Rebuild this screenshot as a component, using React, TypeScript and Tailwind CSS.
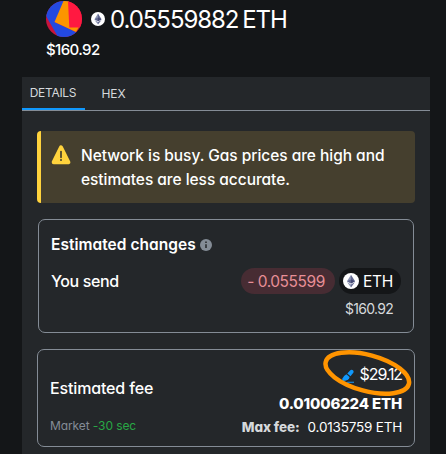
import type { ReactNode } from "react";

function EthIcon({ className }: { className: string }) {
  return (
    <svg viewBox="0 0 16 16" className={className}>
      <circle cx="8" cy="8" r="8" fill="#fff" />
      <path d="M8 1.800 4 8.200 8 10.500z" fill="#8a92b2" />
      <path d="M8 1.800 12 8.200 8 10.500z" fill="#626890" />
      <path d="M4 8.200 8 6.400v4.100z" fill="#62688f" />
      <path d="M12 8.200 8 6.400v4.100z" fill="#454a75" />
      <path d="M4 9.100 8 11.400v3z" fill="#8a92b2" />
      <path d="M12 9.100 8 11.400v3z" fill="#626890" />
    </svg>
  );
}

function Avatar() {
  return (
    <svg viewBox="0 0 36 36" className="block size-9">
      <defs>
        <clipPath id="avatar">
          <circle cx="18" cy="18" r="18" />
        </clipPath>
      </defs>
      <g clipPath="url(#avatar)">
        <rect width="36" height="36" fill="#c8143c" />
        <path d="M-4 12 6 0h16L8.500 21 32 32 22 40 12 36 0 15z" fill="#2349e0" />
        <path d="M17.500 0H23l10 26-3 5L8.500 21z" fill="#fc9500" />
        <path d="M22 0h14v26.500H23.300z" fill="#ff1941" />
      </g>
    </svg>
  );
}

function Card({ className, children }: { className: string; children: ReactNode }) {
  return <section className={`rounded-[7px] border border-[#848c96] ${className}`}>{children}</section>;
}

export default function App() {
  return (
    <div className="h-[454px] w-[446px] overflow-hidden bg-[#141618] pr-4 pl-[22px] font-['Inter','Liberation_Sans',sans-serif] text-white [font-feature-settings:'cv11']">
      <header className="h-[77px] pt-px pl-6">
        <div className="flex h-9 items-center">
          <Avatar />
          <EthIcon className="ml-[9px] size-[14px]" />
          <h1 className="ml-[5px] pt-px text-[24px] leading-9 tracking-[-1.050px] [word-spacing:-2px] whitespace-nowrap">0.05559882 ETH</h1>
        </div>
        <p className="pt-px text-[15px] leading-6 font-medium tracking-[-0.6px]">$160.92</p>
      </header>

      <main className="h-[377px] bg-[#24272a]">
        <nav className="flex h-[34px] border-b border-[#848c96] text-[12px] leading-8 text-[#d6d9dc]">
          <button className="h-[33px] w-[63px] border-b-2 border-[#1098fc] pr-px tracking-[-0.300px]">DETAILS</button>
          <button className="h-[33px] w-[57px] tracking-[-0.1px]">HEX</button>
        </nav>

        <div className="px-[15px] pt-5">
          <div className="flex h-[72px] rounded-[4px] border-l-4 border-[#ffd33d] bg-[#453f2e] pt-[13px] pl-[10px]">
            <svg viewBox="0 0 20 20" className="mt-px size-5">
              <path d="M10 2.300 17.300 17.200H2.700z" fill="#ffd33d" stroke="#ffd33d" strokeWidth="4" strokeLinejoin="round" />
              <path d="M10 6.500v5.800" stroke="#453f2e" strokeWidth="1.700" strokeLinecap="round" />
              <circle cx="10" cy="15" r="1" fill="#453f2e" />
            </svg>
            <p className="ml-[10px] text-[15.500px] leading-6 font-medium tracking-[-0.040px] whitespace-nowrap">
              Network is busy. Gas prices are high and
              <br />
              estimates are less accurate.
            </p>
          </div>

          <Card className="mx-px mt-4 h-[114px] px-3 pt-[13px]">
            <div className="flex h-6 items-center">
              <h2 className="text-[15.500px] font-semibold tracking-[0.030px]">Estimated changes</h2>
              <svg viewBox="0 0 12 12" className="ml-1 size-3">
                <circle cx="6" cy="6" r="6" fill="#848c96" />
                <path d="M6 5.200v3.800M6 2.600v1.500" stroke="#24272a" strokeWidth="1.500" />
              </svg>
            </div>
            <div className="mt-[11px] flex h-[26px] items-center">
              <span className="text-[16px] font-medium tracking-[-0.400px]">You send</span>
              <span className="ml-auto flex h-[26px] w-[94px] items-center justify-center rounded-full bg-[#472c33] pt-px pr-1 text-[15.500px] tracking-[-0.450px] text-[#e88f97]">- 0.055599</span>
              <span className="ml-1 flex h-[26px] w-[62px] items-center rounded-full bg-[#141618] pl-1 text-[15.500px] tracking-[-0.300px]">
                <EthIcon className="mr-1 size-4" />
                <span className="pt-px">ETH</span>
              </span>
            </div>
            <p className="mt-[5px] pr-2 text-right text-[14px] leading-5 tracking-[-0.700px] text-[#d6d9dc]">$160.92</p>
          </Card>

          <Card className="relative mt-4 flex h-[98px] justify-between px-3">
            <div className="pt-[26px]">
              <h2 className="text-[16px] leading-6 font-medium tracking-[-0.150px]">Estimated fee</h2>
              <p className="mt-4 text-[12px] leading-5 tracking-[-0.100px] text-[#848c96]">
                Market <span className="text-[#28a745]">-30 sec</span>
              </p>
            </div>
            <div className="pt-3 text-right whitespace-nowrap">
              <div className="flex h-6 items-center justify-end">
                <svg viewBox="0 0 12 14" className="mt-[3px] mr-[6px] h-[14px] w-3 fill-[#1098fc]">
                  <path d="M.3 12V9.800Q1 7 4.400 5.200L7.600 8.100Q7 11.200 3 11.700z" />
                  <path d="m5.300 4.600 2.300-2.700Q9.500-.2 11.200 1.400q1 1.500-.3 2.900L8.500 7.300z" />
                  <path d="M5.500 12.700H12v1H4z" />
                </svg>
                <span className="text-[16px] tracking-[-1.100px]">$29.12</span>
              </div>
              <p className="mt-[6px] text-[15px] leading-6 font-extrabold tracking-[-0.170px]">0.01006224 ETH</p>
              <p className="text-[13.500px] leading-[22px]">
                <b className="mr-2 font-extrabold tracking-[-0.100px] text-[#d6d9dc]">Max fee:</b>
                <span className="tracking-[-0.2px]">0.0135759 ETH</span>
              </p>
            </div>
            <svg viewBox="0 0 92 50" className="pointer-events-none absolute top-0 right-0 h-[50px] w-[92px]">
              <ellipse cx="45.300" cy="23" rx="43" ry="18" transform="rotate(15 45.300 23)" fill="none" stroke="#ff9400" strokeWidth="4.500" />
            </svg>
          </Card>
        </div>
      </main>
    </div>
  );
}
